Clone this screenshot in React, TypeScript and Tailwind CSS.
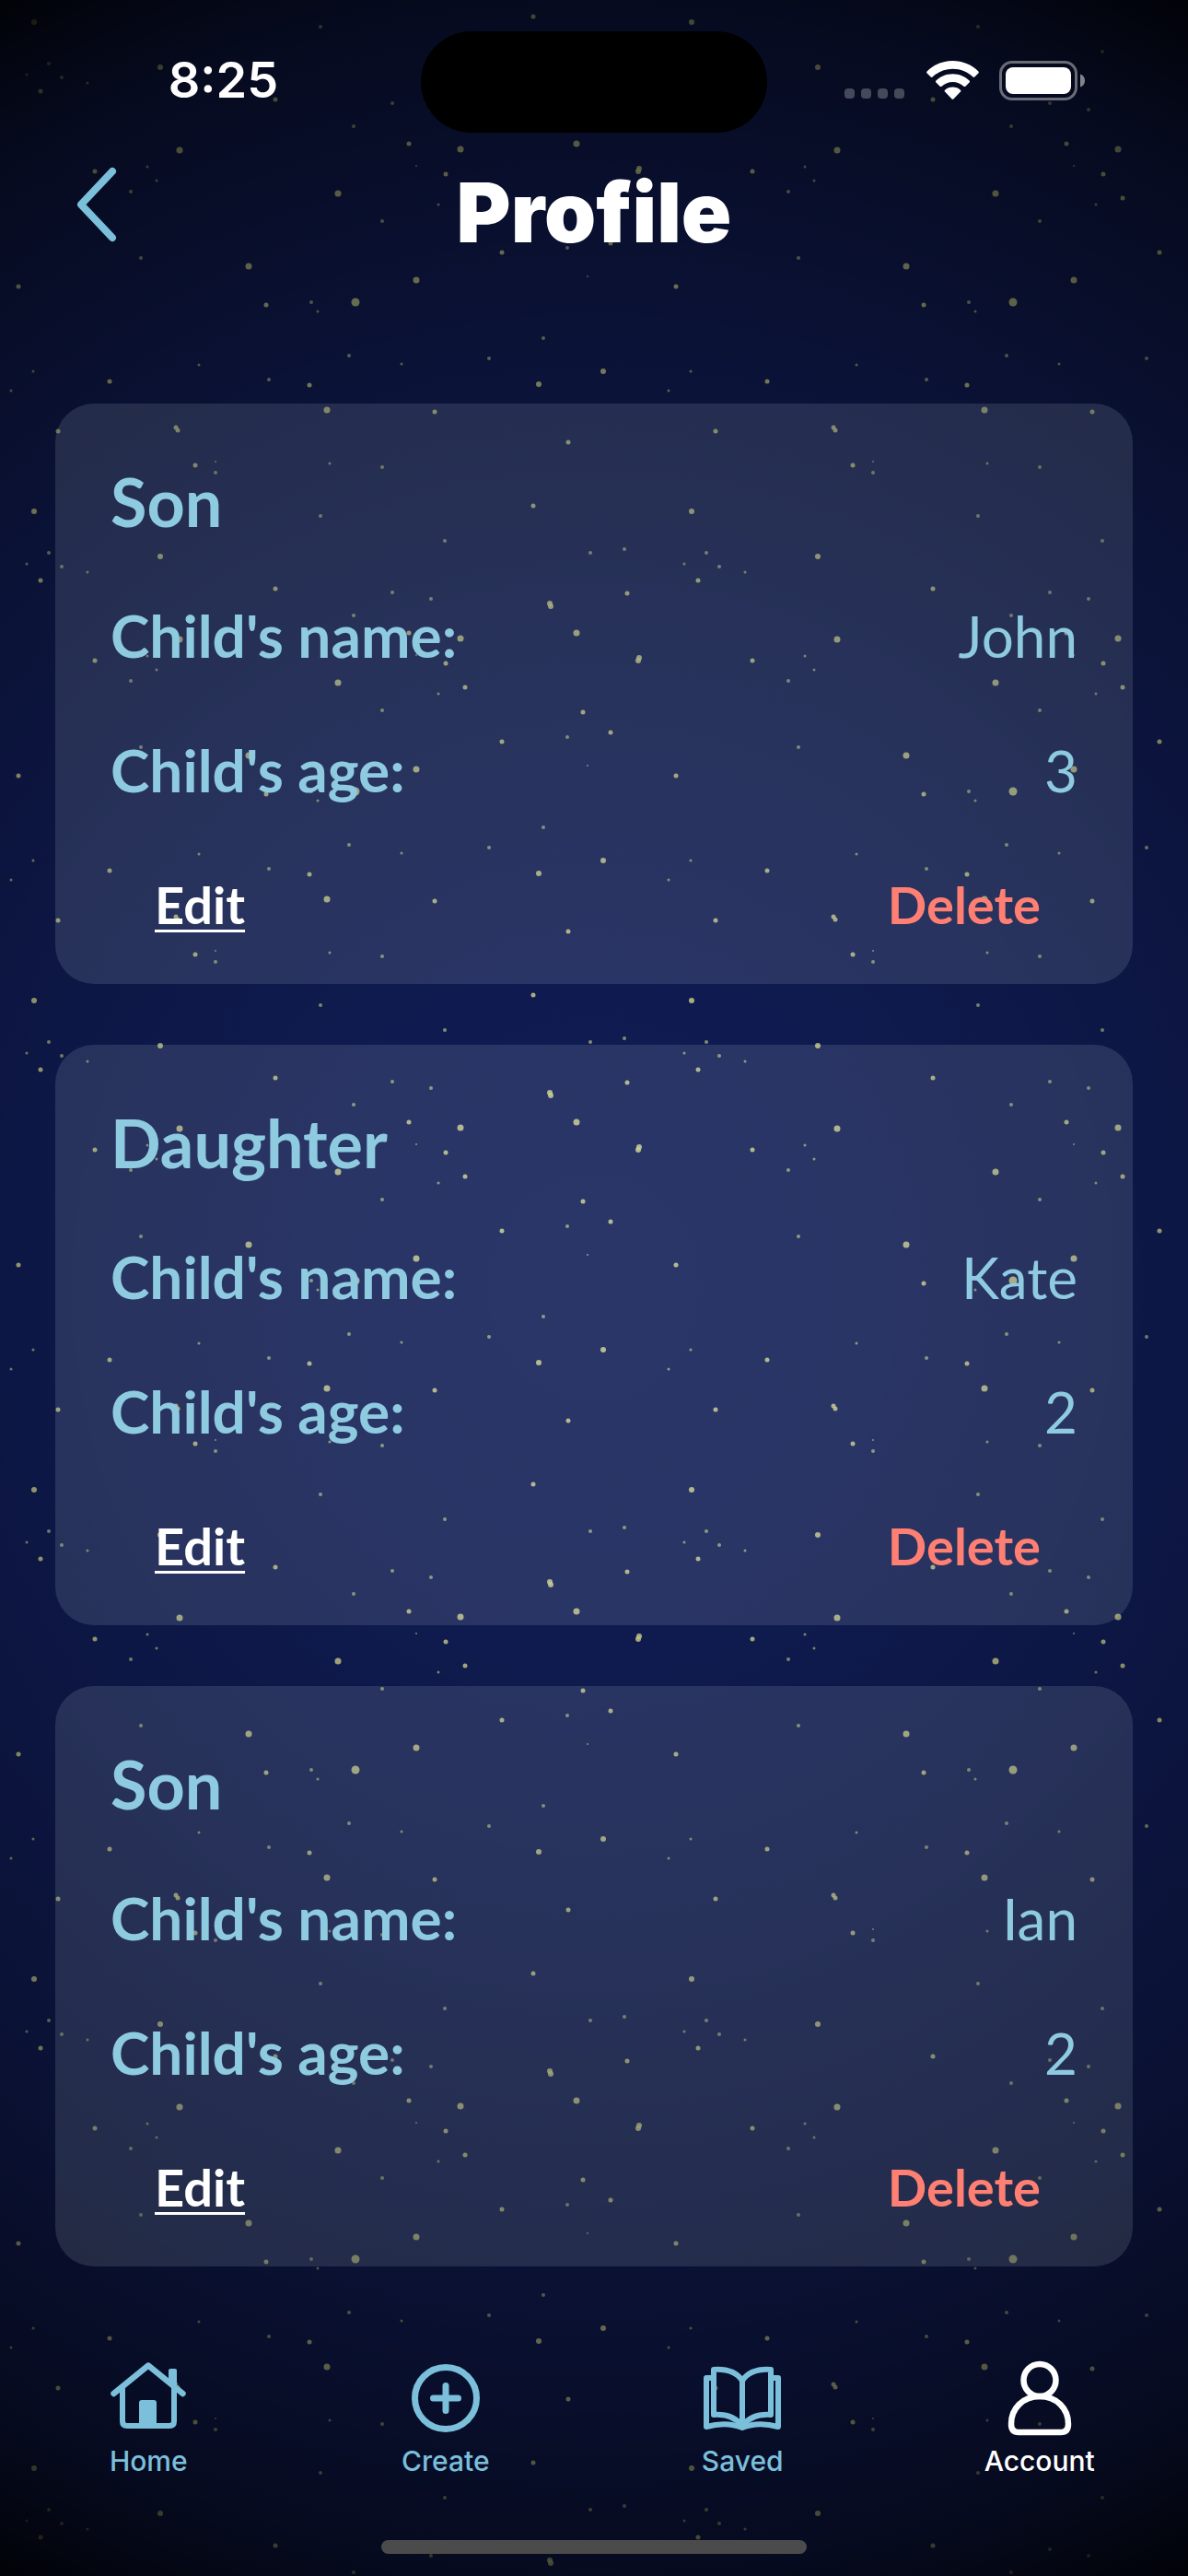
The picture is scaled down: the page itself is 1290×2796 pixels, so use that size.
import type { ReactNode } from "react";

/* ========== types ========== */

interface Child {
  id: number;
  relation: string;
  name: string;
  age: number;
}

interface Tab {
  key: string;
  label: string;
  icon: ReactNode;
}

/* ========== data ========== */

const CHILDREN: Child[] = [
  { id: 1, relation: "Son", name: "John", age: 3 },
  { id: 2, relation: "Daughter", name: "Kate", age: 2 },
  { id: 3, relation: "Son", name: "Ian", age: 2 },
];

/** One tile of the night sky: x, y, radius */
const STARS: [number, number, number][] = [
  [483, 18, 2], [53, 31, 2], [678, 27, 2], [641, 31, 2], [174, 35, 3], [29, 43, 1.5],
  [67, 46, 2], [95, 52, 1.5], [44, 61, 2.5], [299, 70, 2.5], [426, 74, 2], [468, 81, 2],
  [681, 75, 2.5], [597, 86, 3], [598, 89, 3], [384, 99, 2], [444, 118, 2.5], [626, 118, 3.5],
  [500, 124, 3.5], [195, 125, 3.5], [694, 145, 3], [693, 148, 3], [103, 148, 2.5], [484, 151, 2.5],
  [452, 142, 1], [160, 143, 1.5], [170, 158, 1.5], [142, 170, 2], [367, 172, 3.5], [505, 177, 2.5],
  [476, 184, 1.5], [415, 202, 2], [633, 204, 2.5], [663, 226, 2.5], [616, 231, 2], [545, 236, 2.5],
  [153, 242, 2], [270, 251, 3.5], [452, 266, 3.5], [638, 262, 1], [20, 273, 2.5], [289, 293, 2.5],
  [338, 290, 2], [386, 290, 4.5], [345, 300, 1.5], [590, 329, 2], [379, 348, 2], [531, 351, 2],
  [216, 358, 1.5], [436, 357, 1.5], [36, 365, 1.5], [655, 365, 3], [119, 376, 2.5], [585, 379, 3],
  [292, 374, 2], [336, 380, 2.5], [12, 386, 1.5], [355, 407, 3.5], [472, 409, 2.5], [63, 430, 2.5],
  [191, 426, 2.5], [193, 429, 2.5], [617, 442, 2.5], [212, 467, 2.5], [234, 463, 1], [234, 475, 2],
  [415, 469, 2], [358, 465, 1.5], [579, 511, 2.5], [37, 517, 3], [348, 522, 2],
];

const TABS: Tab[] = [
  { key: "home", label: "Home", icon: <HomeIcon /> },
  { key: "create", label: "Create", icon: <CreateIcon /> },
  { key: "saved", label: "Saved", icon: <BookIcon /> },
  { key: "account", label: "Account", icon: <AccountIcon /> },
];

/* ========== tab icons ========== */

function HomeIcon() {
  return (
    <svg viewBox="0 0 96 96" className="size-24" fill="none" stroke="currentColor" strokeLinecap="round" strokeLinejoin="round" aria-hidden="true">
      <path d="M10.5 43 48 12.5 85.5 43" strokeWidth="6.5" />
      <path d="M20 38V73Q20 78 25 78H71Q76 78 76 73V38" strokeWidth="6" />
      <path d="M70 30V18Q70 16 72 16H77Q79 16 79 18V38Z" fill="currentColor" stroke="none" />
      <path d="M38 78V53Q38 50 41 50H54Q57 50 57 53V78Z" fill="currentColor" stroke="none" />
    </svg>
  );
}

function CreateIcon() {
  return (
    <svg viewBox="0 0 96 96" className="size-24" fill="none" stroke="currentColor" strokeWidth="7" strokeLinecap="round" aria-hidden="true">
      <circle cx="48" cy="48" r="33.5" />
      <path d="M48 34.5V61.5M34.5 48H61.5" />
    </svg>
  );
}

function BookIcon() {
  return (
    <svg viewBox="0 0 96 96" className="size-24" fill="none" stroke="currentColor" strokeWidth="6" strokeLinejoin="round" aria-hidden="true">
      <path d="M48 29C42 20 32 16 17 17V66C31 65 41 69 48 78C55 69 65 65 79 66V17C64 16 54 20 48 29V80" />
      <path d="M17 26H9V79C23 75 36 75 48 80C60 75 73 75 87 79V26H79" />
    </svg>
  );
}

function AccountIcon() {
  return (
    <svg viewBox="0 0 96 96" className="size-24" fill="none" stroke="currentColor" strokeWidth="6.5" aria-hidden="true">
      <circle cx="48" cy="28.5" r="17.5" />
      <path d="M25 85H71Q79 85 79 76C79 59 66 46 48 46C30 46 17 59 17 76Q17 85 25 85Z" />
    </svg>
  );
}

/* ========== background ========== */

function NightSky() {
  return (
    <div className="absolute inset-0 -z-10 bg-[#101c54]">
      <svg className="size-full" aria-hidden="true">
        <defs>
          <pattern id="stars" y="38" width="714" height="531" patternUnits="userSpaceOnUse">
            {STARS.map(([x, y, r]) => (
              <circle key={`${x}-${y}`} cx={x} cy={y} r={r} fill="#cdd08c" fillOpacity={r < 2.5 ? 0.65 : 0.85} />
            ))}
          </pattern>
        </defs>
        <rect width="100%" height="100%" fill="url(#stars)" />
      </svg>
      <div className="absolute inset-0 bg-[radial-gradient(140%_70%_at_center,rgba(0,0,0,0)_0%,rgba(0,0,0,0.05)_18%,rgba(0,0,0,0.17)_34%,rgba(0,0,0,0.36)_53%,rgba(0,0,0,0.62)_71%,rgba(0,0,0,0.95)_81%)]" />
    </div>
  );
}

/* ========== status bar ========== */

function StatusBar() {
  return (
    <div className="flex items-center pt-[34px]">
      <div className="flex-1 pb-1 pl-7 text-center text-[54px] leading-none font-semibold">8:25</div>
      <div className="h-[110px] w-[376px] rounded-full bg-black" />
      <div className="flex flex-1 items-center justify-center pr-7 pb-1">
        <div className="mr-6 flex gap-[7px] pt-7">
          {[0, 1, 2, 3].map((i) => (
            <span key={i} className="h-[11px] w-[11px] rounded-[4px] bg-white/25" />
          ))}
        </div>
        <svg viewBox="0 0 57 42" className="mr-[22px] h-[42px] w-[57px]" fill="#fff" aria-hidden="true">
          <path d="M28.5 0C39 0 49 4 56.4 11.5Q57.3 12.5 56.4 13.5L52.3 17.6Q51.5 18.4 50.5 17.5C44.5 12 37 8.7 28.5 8.7S12.5 12 6.5 17.5Q5.5 18.4 4.7 17.6L.6 13.5Q-.3 12.5.6 11.5C8 4 18 0 28.5 0Z" />
          <path d="M28.5 14.3C35.5 14.3 42 17 46.6 21.6Q47.5 22.5 46.6 23.5L42.4 27.7Q41.5 28.5 40.5 27.7C37 24.7 33 23 28.5 23S20 24.7 16.5 27.7Q15.5 28.5 14.6 27.7L10.4 23.5Q9.5 22.5 10.4 21.6C15 17 21.5 14.3 28.5 14.3Z" />
          <path d="M28.5 28.5C31.8 28.5 34.7 29.7 36.9 31.7Q37.9 32.6 37 33.5L29.6 41.2Q28.5 42.3 27.4 41.2L20 33.5Q19.1 32.6 20.1 31.7C22.3 29.7 25.2 28.5 28.5 28.5Z" />
        </svg>
        <svg viewBox="0 0 94 43" className="h-[43px] w-[94px]" aria-hidden="true">
          <rect x="1.5" y="1.5" width="82" height="40" rx="12.5" fill="none" stroke="#fff" strokeOpacity=".4" strokeWidth="3" />
          <rect x="7" y="7" width="71" height="29" rx="8" fill="#fff" />
          <path d="M88 14.5C91 15.5 93 18 93 21.5S91 27.5 88 28.5Z" fill="#fff" fillOpacity=".5" />
        </svg>
      </div>
    </div>
  );
}

/* ========== header ========== */

function Header() {
  return (
    <header className="grid h-[174px] grid-cols-3 items-center px-20">
      <button type="button" aria-label="Back" className="w-12 pb-[18px] text-[#7bbfdb]">
        <svg viewBox="0 0 48 84" className="h-[84px] w-12" fill="none" stroke="currentColor" strokeWidth="8" strokeLinecap="round" strokeLinejoin="round" aria-hidden="true">
          <path d="M42 6 8 42 42 78" />
        </svg>
      </button>
      <h1 className="text-center text-[90px] leading-none font-black">Profile</h1>
    </header>
  );
}

/* ========== child card ========== */

function DetailRow({ label, value }: { label: string; value: string | number }) {
  return (
    <div className="flex h-20 items-center justify-between leading-none">
      <dt className="text-[64px] font-bold">{label}</dt>
      <dd className="text-[62px] font-normal">{value}</dd>
    </div>
  );
}

function ChildCard({ child }: { child: Child }) {
  return (
    <section className="rounded-[42px] bg-[#e4f4ff]/12 px-[60px] pt-[66px] pb-[46px] font-[Lato,'Open_Sans',sans-serif] text-[#8ecae0]">
      <h2 className="flex h-20 items-center text-[72px] leading-none font-bold">{child.relation}</h2>
      <dl className="my-[66px] flex flex-col gap-[66px]">
        <DetailRow label="Child's name:" value={child.name} />
        <DetailRow label="Child's age:" value={child.age} />
      </dl>
      <div className="flex h-20 items-center justify-between pr-10 pl-12 text-[56px] leading-none font-bold">
        <button type="button" className="text-white underline decoration-3 underline-offset-6">
          Edit
        </button>
        <button type="button" className="text-[#ff7f73]">
          Delete
        </button>
      </div>
    </section>
  );
}

/* ========== tab bar ========== */

function TabBar({ active }: { active: string }) {
  return (
    <nav className="grid grid-cols-4 pt-[95px]">
      {TABS.map((tab) => (
        <a
          key={tab.key}
          href={`#${tab.key}`}
          aria-current={tab.key === active ? "page" : undefined}
          className={`flex flex-col items-center gap-0.5 text-[30px] leading-9 font-medium ${
            tab.key === active ? "text-white" : "text-[#7bbfdb]"
          }`}
        >
          {tab.icon}
          {tab.label}
        </a>
      ))}
    </nav>
  );
}

/* ========== page ========== */

export default function App() {
  return (
    <div className="relative isolate flex min-h-screen flex-col font-[Inter,'Liberation_Sans',sans-serif] text-white">
      <NightSky />
      <StatusBar />
      <Header />
      <main className="flex flex-col gap-[66px] px-[60px] pt-[120px]">
        {CHILDREN.map((child) => (
          <ChildCard key={child.id} child={child} />
        ))}
      </main>
      <TabBar active="account" />
      <div className="mx-auto mt-auto mb-6 h-[15px] w-[462px] rounded-full bg-[#4b4b4b]" />
    </div>
  );
}
